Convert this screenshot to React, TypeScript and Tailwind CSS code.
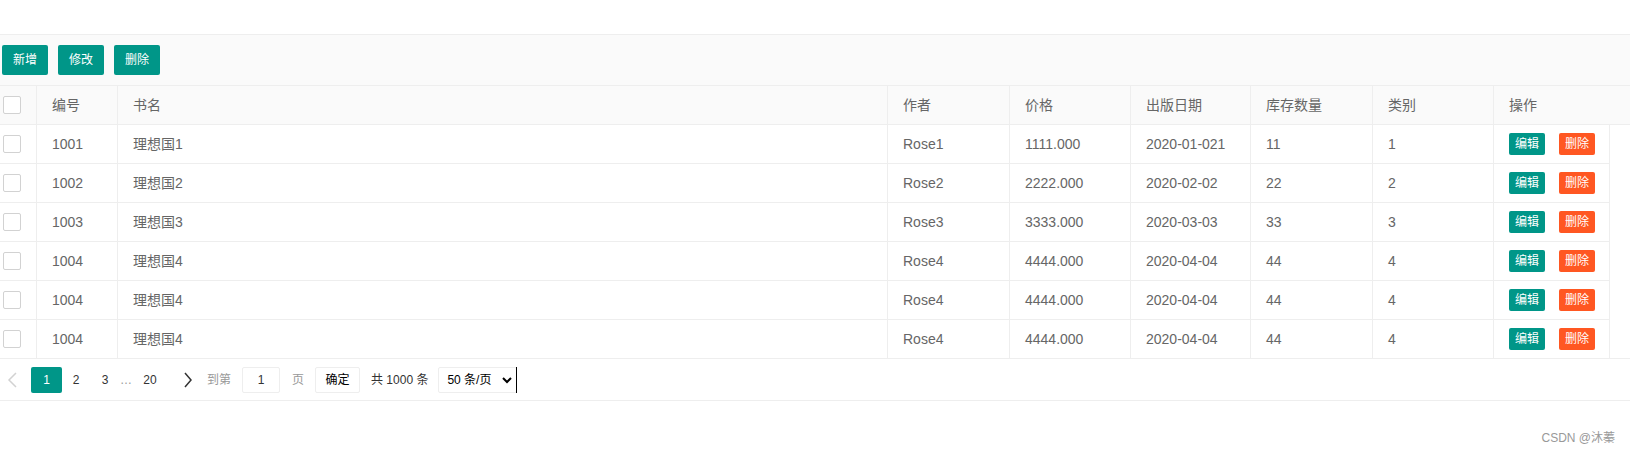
import { useState } from "react";

type Book = {
	id: string;
	name: string;
	author: string;
	price: string;
	date: string;
	stock: string;
	type: string;
};

const books: Book[] = [
	{ id: "1001", name: "理想国1", author: "Rose1", price: "1111.000", date: "2020-01-021", stock: "11", type: "1" },
	{ id: "1002", name: "理想国2", author: "Rose2", price: "2222.000", date: "2020-02-02", stock: "22", type: "2" },
	{ id: "1003", name: "理想国3", author: "Rose3", price: "3333.000", date: "2020-03-03", stock: "33", type: "3" },
	{ id: "1004", name: "理想国4", author: "Rose4", price: "4444.000", date: "2020-04-04", stock: "44", type: "4" },
	{ id: "1004", name: "理想国4", author: "Rose4", price: "4444.000", date: "2020-04-04", stock: "44", type: "4" },
	{ id: "1004", name: "理想国4", author: "Rose4", price: "4444.000", date: "2020-04-04", stock: "44", type: "4" },
];

const cell = "flex items-center px-[15px] border-r border-[#eee] truncate";

const Checkbox = () => (
	<span className="block w-[18px] h-[18px] ml-[3px] border border-[#d2d2d2] rounded-[2px] bg-white" />
);

const ToolBtn = ({ label }: { label: string }) => (
	<button className="w-[46px] h-[30px] rounded-[2px] bg-[#009688] text-white text-[12px] leading-none">{label}</button>
);

const App = () => {
	const [page] = useState(1);

	return (
		<div className="w-[1630px] h-[453px] bg-white text-[#666] font-['Liberation_Sans','Noto_Sans_CJK_SC',sans-serif] overflow-hidden">
			<div className="h-[34px]" />

			{/* toolbar */}
			<div className="h-[51px] border-t border-[#eee] bg-[#fafafa] flex items-start gap-[10px] pl-[2px] pt-[10px]">
				<ToolBtn label="新增" />
				<ToolBtn label="修改" />
				<ToolBtn label="删除" />
			</div>

			{/* header */}
			<div className="grid grid-cols-[37px_81px_770px_122px_121px_120px_122px_121px_1fr] h-[40px] border-y border-[#eee] bg-[#fafafa] text-[14px]">
				<div className="flex items-center border-r border-[#eee]">
					<Checkbox />
				</div>
				<div className={cell}>编号</div>
				<div className={cell}>书名</div>
				<div className={cell}>作者</div>
				<div className={cell}>价格</div>
				<div className={cell}>出版日期</div>
				<div className={cell}>库存数量</div>
				<div className={cell}>类别</div>
				<div className="flex items-center px-[15px]">操作</div>
			</div>

			{/* body */}
			<div className="border-b border-[#eee]">
				{books.map((b, i) => (
					<div
						key={i}
						className={`w-[1610px] grid grid-cols-[37px_81px_770px_122px_121px_120px_122px_121px_116px] text-[14px] ${
							i === books.length - 1 ? "h-[38px]" : "h-[39px] border-b border-[#eee]"
						}`}>
						<div className="flex items-center border-r border-[#eee]">
							<Checkbox />
						</div>
						<div className={cell}>{b.id}</div>
						<div className={cell}>{b.name}</div>
						<div className={cell}>{b.author}</div>
						<div className={cell}>{b.price}</div>
						<div className={cell}>{b.date}</div>
						<div className={cell}>{b.stock}</div>
						<div className={cell}>{b.type}</div>
						<div className="flex items-center gap-[14px] pl-[15px] border-r border-[#eee]">
							<button className="w-[36px] h-[22px] rounded-[2px] bg-[#009688] text-white text-[12px] leading-none">编辑</button>
							<button className="w-[36px] h-[22px] rounded-[2px] bg-[#FF5722] text-white text-[12px] leading-none">删除</button>
						</div>
					</div>
				))}
			</div>

			{/* pagination */}
			<div className="h-[42px] border-b border-[#eee] flex items-center text-[12px] text-[#333]">
				<span className="w-[31px] flex pl-[7px]">
					<svg width="10" height="16" viewBox="0 0 10 16" fill="none">
						<path d="M9 1 2 8 9 15" stroke="#d2d2d2" strokeWidth="1.5" />
					</svg>
				</span>
				<span className="w-[31px] h-[26px] flex items-center justify-center rounded-[2px] bg-[#009688] text-white">{page}</span>
				<span className="w-[28px] text-center">2</span>
				<span className="w-[30px] text-center">3</span>
				<span className="w-[12px] text-center text-[#999]">…</span>
				<span className="w-[36px] text-center">20</span>
				<span className="w-[39px] flex pl-[16px]">
					<svg width="8" height="16" viewBox="0 0 8 16" fill="none">
						<path d="M1 1 7 8 1 15" stroke="#333" strokeWidth="1.5" />
					</svg>
				</span>
				<span className="text-[#999]">到第</span>
				<span className="w-[38px] h-[26px] ml-[11px] flex items-center justify-center border border-[#eee] rounded-[2px]">1</span>
				<span className="text-[#999] ml-[12px]">页</span>
				<span className="w-[45px] h-[26px] ml-[11px] flex items-center justify-center border border-[#eee] rounded-[2px] text-black">确定</span>
				<span className="ml-[11px]">共 1000 条</span>
				<span className="w-[79px] h-[26px] ml-[10px] flex items-center justify-between pl-[8px] pr-[4px] border border-[#eee] rounded-[2px] text-black">
					50 条/页
					<svg width="10" height="8" viewBox="0 0 10 8" fill="none">
						<path d="M1 2 5 6 9 2" stroke="#000" strokeWidth="2" />
					</svg>
				</span>
				<span className="w-px h-[26px] bg-black -ml-[1px]" />
			</div>

			<div className="flex justify-end pr-[15px] pt-[28px] text-[12px] text-[#999]">CSDN @沐蓁</div>
		</div>
	);
};

export default App;
